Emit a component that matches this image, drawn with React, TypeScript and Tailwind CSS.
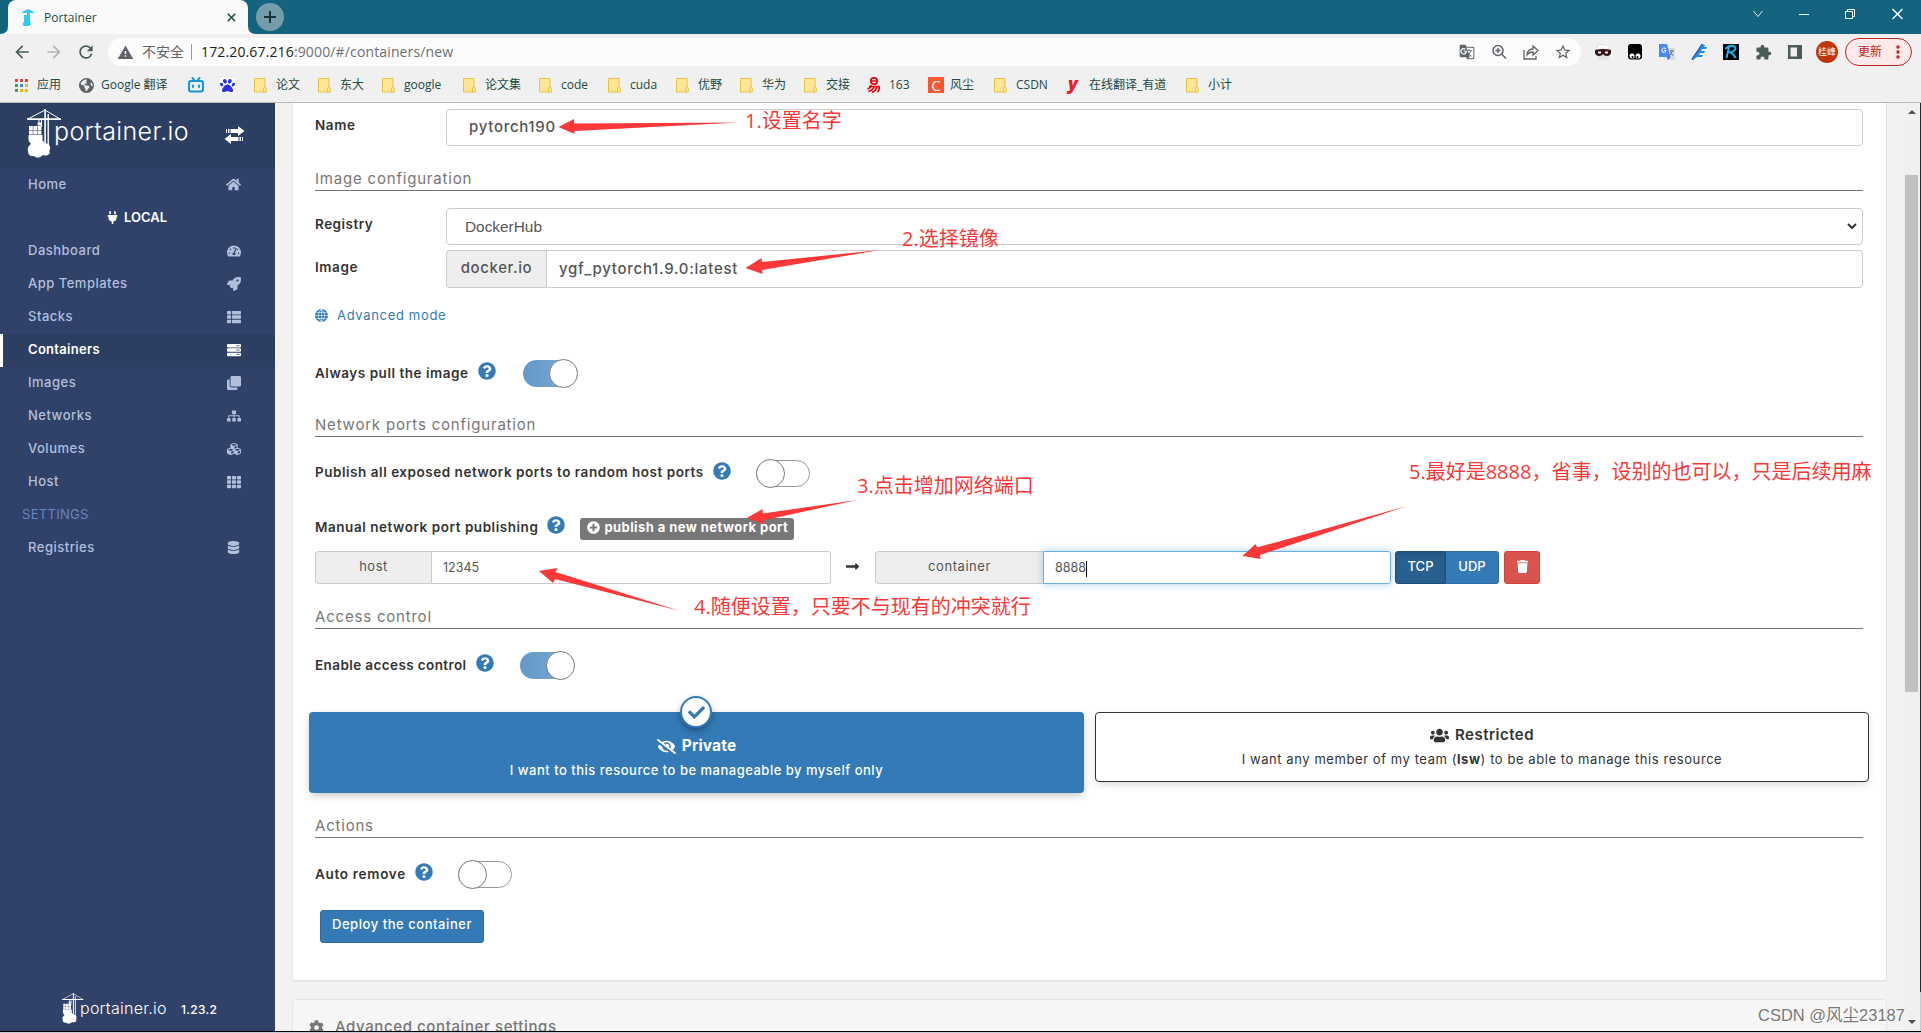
import type { ReactNode } from "react";
import {
  FaCheck, FaClone, FaCog, FaCubes, FaDatabase, FaEyeSlash, FaHome, FaLongArrowAltRight, FaPlug, FaPlusCircle,
  FaQuestionCircle, FaRocket, FaServer, FaSitemap, FaTachometerAlt, FaTh, FaThList, FaTrash, FaUsers,
} from "react-icons/fa";
import { MdArrowBack, MdArrowForward, MdExtension, MdRefresh, MdWarning, MdGTranslate, MdStarBorder } from "react-icons/md";
import { FaPaw, FaEarthAmericas } from "react-icons/fa6";

const menu = [
  { name: "Dashboard", icon: FaTachometerAlt },
  { name: "App Templates", icon: FaRocket },
  { name: "Stacks", icon: FaThList },
  { name: "Containers", icon: FaServer, active: true },
  { name: "Images", icon: FaClone },
  { name: "Networks", icon: FaSitemap },
  { name: "Volumes", icon: FaCubes },
  { name: "Host", icon: FaTh },
];

function Folder() {
  return (
    <svg width="13" height="15" viewBox="0 0 13 15">
      <path d="M.5.5h10.5v13.500H.5z" fill="#ffe694" stroke="#e8c341" />
      <path d="M9.500 14v-3.500q0-1 1-1h1q.8 0 .8 1V14z" fill="#ffe694" stroke="#e8c341" />
    </svg>
  );
}

function AppsGrid() {
  const colors = ["#ea4335", "#ea4335", "#ea4335", "#34a853", "#4285f4", "#fbbc04", "#34a853", "#fbbc04", "#fbbc04"];
  return (
    <div className="grid grid-cols-3 gap-[2px]">
      {colors.map((c, i) => (
        <span key={i} className="w-[3px] h-[3px]" style={{ backgroundColor: c }} />
      ))}
    </div>
  );
}

function Bilibili() {
  return (
    <svg width="16" height="16" viewBox="0 0 16 16" fill="none" stroke="#1296db" strokeWidth="2" strokeLinecap="round">
      <rect x="1" y="4" width="14" height="10.500" rx="2" />
      <path d="M4.500 1l1.500 2M11.500 1L10 3M5 8.500v1.500M11 8.500v1.500" />
    </svg>
  );
}

function Netease() {
  return (
    <svg width="14" height="16" viewBox="0 0 14 16" fill="none" stroke="#e60012" strokeWidth="1.700">
      <circle cx="7" cy="4" r="3.200" />
      <path d="M4 4h6M2 9.500h10q1 3-1.500 5.500M4 8q0 3-3.500 4M7 10q-1 3-5.500 4.500M10 10q-1 3.500-5 5.500" />
    </svg>
  );
}

const bookmarks: { w: string; icon: ReactNode; name?: string }[] = [
  { w: "w-16", icon: <AppsGrid />, name: "应用" },
  { w: "w-[109px]", icon: <FaEarthAmericas size={15} color="#5f6368" />, name: "Google 翻译" },
  { w: "w-8", icon: <Bilibili /> },
  { w: "w-[34px]", icon: <span className="bg-white"><FaPaw size={15} color="#2932e1" /></span> },
  { w: "w-16", icon: <Folder />, name: "论文" },
  { w: "w-16", icon: <Folder />, name: "东大" },
  { w: "w-[81px]", icon: <Folder />, name: "google" },
  { w: "w-[76px]", icon: <Folder />, name: "论文集" },
  { w: "w-[69px]", icon: <Folder />, name: "code" },
  { w: "w-[68px]", icon: <Folder />, name: "cuda" },
  { w: "w-16", icon: <Folder />, name: "优野" },
  { w: "w-16", icon: <Folder />, name: "华为" },
  { w: "w-[63px]", icon: <Folder />, name: "交接" },
  { w: "w-[61px]", icon: <Netease />, name: "163" },
  { w: "w-[66px]", icon: <span className="w-4 h-4 bg-[#fc5531] text-white text-[15px] leading-4 text-center">C</span>, name: "风尘" },
  { w: "w-[73px]", icon: <Folder />, name: "CSDN" },
  { w: "w-[119px]", icon: <span className="w-3 text-[#e8202a] text-[18px] leading-4 font-extrabold italic -mt-1 text-center">y</span>, name: "在线翻译_有道" },
  { w: "w-16", icon: <Folder />, name: "小计" },
];

function Browser() {
  return (
    <header className="h-[103px] bg-[#f0f0f0] border-b border-[#b8bab9] font-['Open_Sans','Noto_Sans_CJK_SC',sans-serif] text-[#234a43]">
      <div className="h-[34px] bg-[#14637f] flex">
        <div className="relative ml-2 w-60 h-[34px] bg-[#fafafa] rounded-t-lg flex items-center pl-[14px] pr-3">
          <svg width="12" height="17" viewBox="0 0 12 17" fill="#35c8f5">
            <path d="M0 3L6 0l6 3v1H8v9q3 3-2 4H2q-3-2 0-4V6h3V4H0z" />
          </svg>
          <span className="ml-[10px] mt-[2px] text-[12px] tracking-[0.05px]">Portainer</span>
          <svg className="ml-auto" width="9" height="9" viewBox="0 0 9 9" stroke="#234a43" strokeWidth="1.600">
            <path d="M.8.8l7.400 7.400M8.200.8L.8 8.200" />
          </svg>
          <svg className="absolute -left-2 bottom-0" width="8" height="8" fill="#fafafa"><path d="M8 0v8H0q8 0 8-8z" /></svg>
          <svg className="absolute -right-2 bottom-0" width="8" height="8" fill="#fafafa"><path d="M0 0v8h8q-8 0-8-8z" /></svg>
        </div>
        <div className="ml-2 mt-[3px] w-7 h-7 rounded-full bg-[#759caa] flex items-center justify-center">
          <svg width="12" height="12" stroke="#16323a" strokeWidth="2"><path d="M6 0v12M0 6h12" /></svg>
        </div>
        <div className="ml-auto mr-[18px] mt-2 h-3 flex gap-9 items-center">
          <svg width="10" height="12" fill="none" stroke="#dce9ee"><path d="M.5 3L5 8.500 9.500 3" /></svg>
          <svg width="10" height="12" stroke="white"><path d="M0 6.500h10" /></svg>
          <svg width="11" height="12" fill="none" stroke="white"><path d="M.5 3.500h7v7h-7zM2.500 3V1.500h7v7H8" /></svg>
          <svg width="11" height="12" stroke="white" strokeWidth="1.300"><path d="M.5 1l10 10M10.500 1l-10 10" /></svg>
        </div>
      </div>

      {/* toolbar */}
      <div className="h-9 flex items-center pl-3 text-[#4a5c58]">
        <MdArrowBack size={20} />
        <MdArrowForward size={20} className="ml-3 text-[#b4b8b7]" />
        <MdRefresh size={20} className="ml-3" />
        <div className="ml-3 w-[1473px] h-7 rounded-full bg-[#fcfcfc] flex items-center pl-[9px] text-[#5f6368]">
          <MdWarning size={17} />
          <span className="ml-2 text-[14px] leading-5">不安全</span>
          <span className="ml-[7px] w-px h-4 bg-[#9a9da0]" />
          <span className="ml-[9px] text-[14px] leading-5 tracking-[0.14px] text-[#6b6f73]">
            <span className="text-[#202124]">172.20.67.216</span>:9000/#/containers/new
          </span>
          <div className="ml-auto pr-[9px] flex items-center gap-[15px]">
            <MdGTranslate size={16} />
            <svg width="18" height="18" viewBox="0 0 18 18" fill="none" stroke="#5f6368" strokeWidth="1.500">
              <circle cx="8" cy="7.500" r="5" /><path d="M11.500 11l4.500 4.500M8 5v5M5.500 7.500h5" />
            </svg>
            <svg width="16" height="15" viewBox="0 0 16 15" fill="none" stroke="#5f6368" strokeWidth="1.300">
              <path d="M1 5v9h12v-3M4 10q0-5.500 6-6V1l5 4.500-5 4.500V7Q6 7 4 10z" />
            </svg>
            <MdStarBorder size={18} />
          </div>
        </div>
        <div className="ml-[14px] flex items-center gap-4">
          <svg width="16" height="16" viewBox="0 0 16 16">
            <path d="M2 0h9l3 3v13H2z" fill="#e3e3e3" />
            <path d="M3 1h8l2 2v4H3z" fill="white" />
            <path d="M0 6q8-2 16 0v3q-1 3-4 3-3 0-4-2-1 2-4 2-3 0-4-3z" fill="#301416" />
            <path d="M3 8.500h3M10 8.500h3" stroke="#f6dede" strokeWidth="1.800" />
          </svg>
          <svg width="16" height="16" viewBox="0 0 16 16">
            <rect x="1" width="14" height="15.500" rx="3" fill="black" />
            <circle cx="5" cy="12" r="2.500" fill="white" /><circle cx="11" cy="12" r="2.500" fill="white" />
            <circle cx="5.500" cy="13" r="1" /><circle cx="10.500" cy="13" r="1" />
          </svg>
          <svg width="16" height="16" viewBox="0 0 16 16">
            <path d="M6 4h10v12H9z" fill="#d9dbdd" />
            <path d="M0 0h8l3.500 13H0z" fill="#4a8af4" /><path d="M8 13h3.500L9 16z" fill="#3367d6" />
            <path d="M7 4.500Q4 2.500 3 5.500 2.500 9 5.500 8.500 7 8 7 6.500H5" stroke="white" fill="none" />
            <path d="M11 7h4M13 6v1q0 3-2.500 4.500M11.500 8.500l3 3.500" stroke="#6b7480" fill="none" />
          </svg>
          <svg width="16" height="16" viewBox="0 0 16 16">
            <path d="M11 0l3 1-1 2h3l-1 2h-4l-1 2h4l-1 2H9l-1 2h4l-1 2H6l-4 3H0L5 9z" fill="#2587e8" />
            <path d="M11 0L5 9l-4 6" stroke="#154a8c" fill="none" />
          </svg>
          <svg width="16" height="16" viewBox="0 0 16 16">
            <path d="M0 0h16v16H0z" />
            <path d="M3.500 14L6 3M2.500 5q3-4 8-3 4 2 0 5-3 2-5 1 4 0 7 6" stroke="#16b5f5" strokeWidth="2" fill="none" />
          </svg>
          <MdExtension size={17} className="-mr-px" />
          <svg width="16" height="16" viewBox="0 0 16 16"><path d="M1 1h14v14H1zM3.500 3.500v9H10v-9z" fill="#4a5c58" fillRule="evenodd" /></svg>
        </div>
        <span className="ml-[13px] w-[22px] h-[22px] rounded-full bg-[#bf360c] text-white text-[9px] leading-[21px] text-center">桂峰</span>
        <div className="ml-[7px] w-[67px] h-7 rounded-full border border-[#c5221f] bg-[#fbeae9] text-[#c5221f] flex items-center pl-3 text-[12px]">
          更新
          <svg className="ml-[14px]" width="4" height="14" fill="#c5221f"><circle cx="2" cy="2" r="1.700" /><circle cx="2" cy="7" r="1.700" /><circle cx="2" cy="12" r="1.700" /></svg>
        </div>
      </div>

      {/* bookmarks */}
      <div className="h-[30px] flex items-center pl-[15px] text-[12px] leading-4">
        {bookmarks.map((b, i) => (
          <div key={i} className={`${b.w} shrink-0 flex items-center whitespace-nowrap`}>
            <span className="w-[22px] flex">{b.icon}</span>
            {b.name}
          </div>
        ))}
      </div>
    </header>
  );
}

function Crane({ className }: { className: string }) {
  return (
    <svg className={className} viewBox="0 0 35 49" fill="white">
      <path d="M18 1L1 10M18 1l15 9" stroke="white" fill="none" />
      <path d="M0 9.200h34v1.800H0zM17.300 0h1.600v36h-1.600zM20.500 5h1.400v32h-1.400zM11.500 10h1v6h-1zM14 10h1v8h-1z" />
      <path d="M2 17h3.800v4H2zM6.300 17h3.800v4H6.300zM10.600 17h3.800v4h-3.800zM2 21.500h3.800v4H2zM6.300 21.500h3.800v4H6.300zM10.600 21.500h3.800v4h-3.800zM10.600 13.500h3.500v3h-3.500zM1.500 26h14v6q-3 5-9 4-5-2-5-6z" />
      <path d="M3 36q2-4 6-3 6-4 9 1 6 1 5 6-1 2 0 4-3 4-7 2-5 5-9 1-6 1-6-5-1-4 2-6z" />
    </svg>
  );
}

function Sidebar() {
  return (
    <aside className="w-[275px] shrink-0 bg-[#30426a] text-[#b2bfdc] text-[13px] font-medium tracking-[0.5px] flex flex-col">
      <div className="h-[66px] bg-[#2d3e63] flex pl-[27px]">
        <Crane className="w-[35px] h-[49px] mt-[6px]" />
        <span className="-ml-[8px] mt-3 w-[135px] text-[25px] leading-8 font-light tracking-[0.35px] text-white">portainer.io</span>
        <svg className="ml-[35px] mt-[23px] h-[18px] w-[21px]" viewBox="0 0 21 18" fill="white">
          <path d="M2 3h1v4H2zM4 3h1.500v4H4zM6.500 3H14V0l6.500 5L14 10V7H6.500zM19 11h-1v4h1zM17 11h-1.500v4H17zM14.500 11H7V8L.5 13 7 18v-3h7.500z" />
        </svg>
      </div>
      <div className="h-[33px] pb-[2px] flex items-center justify-between pl-7 pr-[34px]">Home <FaHome size={15} /></div>
      <div className="h-[33px] pb-[2px] flex items-center justify-center gap-[5px] text-white font-semibold tracking-normal"><FaPlug size={13} className="-ml-[2px]" /> LOCAL</div>
      {menu.map(({ name, icon: Icon, active }) => (
        <div
          key={name}
          className={`h-[33px] pb-[2px] flex items-center justify-between pr-[34px] ${active ? "bg-[#2d3e63] border-l-[3px] border-white pl-[25px] text-white font-semibold tracking-[0.3px]" : "pl-7"}`}
        >
          {name}
          <span className="w-[15px] flex justify-center"><Icon size={14} /></span>
        </div>
      ))}
      <div className="h-[33px] pb-[2px] flex items-center pl-[22px] text-[#6b84c2] font-normal tracking-[0.3px]">SETTINGS</div>
      <div className="h-[33px] pb-[2px] flex items-center justify-between pl-7 pr-[35px]">Registries <FaDatabase size={13} /></div>
      <div className="mt-auto h-[38px] flex pl-[62px] text-white">
        <Crane className="w-[22px] h-[31px]" />
        <span className="-ml-[4px] mt-[5px] w-[87px] text-[16px] leading-5 font-light tracking-[0.25px]">portainer.io</span>
        <span className="ml-[14px] mt-[9px] text-[12px] leading-4 tracking-[0.3px]">1.23.2</span>
      </div>
    </aside>
  );
}

function Heading({ className, children }: { className: string; children: ReactNode }) {
  return (
    <h3 className={`h-[23px] w-[1548px] border-b border-[#777] text-[15px] leading-[22px] font-normal tracking-[0.8px] text-[#777] ${className}`}>
      {children}
    </h3>
  );
}

function Toggle({ on, className }: { on?: boolean; className: string }) {
  return (
    <span className={`w-[54px] h-[27px] rounded-full relative ${on ? "bg-[linear-gradient(90deg,#6398c8,#7facd3)]" : "bg-white border border-[#999]"} ${className}`}>
      <span className={`absolute w-[29px] h-[29px] rounded-full bg-white border border-[#7a7a7a] ${on ? "-top-px -right-px" : "-top-[2px] -left-px"}`} />
    </span>
  );
}

function Help({ className }: { className: string }) {
  return <FaQuestionCircle size={18} className={`text-[#337ab7] relative -top-[2px] ${className}`} />;
}

const label = "text-[13.5px] font-semibold text-[#333] whitespace-nowrap";
const addon = "bg-[#eee] border border-[#ccc] border-r-0 rounded-l text-center text-[#555]";

function Form() {
  return (
    <section className="h-[878px] bg-white border-x border-b border-[#e5e5e5] shadow-[0_1px_1px_rgba(0,0,0,0.05)] rounded-b-sm pl-[22px] pt-[6px]">
      <div className="h-[37px] flex">
        <span className={`${label} tracking-[0.6px] w-[131px] mt-[6px] leading-5`}>Name</span>
        <div className="w-[1417px] h-[37px] border border-[#ccc] rounded pl-[22px] text-[15px] leading-[34px] font-medium tracking-[0.7px] text-[#555]">pytorch190</div>
      </div>

      <Heading className="mt-[22px]">Image configuration</Heading>
      <div className="mt-[17px] flex">
        <span className={`${label} tracking-[0.5px] w-[131px] mt-[6px] leading-5`}>Registry</span>
        <div className="w-[1417px] h-[37px] border border-[#ccc] rounded pl-[18px] pr-[5px] flex items-center justify-between font-['Liberation_Sans',sans-serif] text-[15.4px] text-[#555]">
          DockerHub
          <svg width="10" height="7" fill="none" stroke="#333" strokeWidth="2"><path d="M1 1l4 4 4-4" /></svg>
        </div>
      </div>
      <div className="mt-[5px] flex h-[38px] text-[15px] leading-[34px] font-medium">
        <span className={`${label} tracking-[0.6px] w-[131px] mt-[7px] leading-5`}>Image</span>
        <span className={`${addon} w-[100px] tracking-[0.6px]`}>docker.io</span>
        <span className="w-[1317px] border border-[#ccc] rounded-r pl-3 tracking-[0.73px] text-[#555] leading-[35px]">ygf_pytorch1.9.0:latest</span>
      </div>
      <div className="mt-[18px] mb-[-1px] h-5 flex items-center text-[13px] tracking-[0.67px] text-[#337ab7]">
        <svg width="13" height="13" viewBox="0 0 13 13" className="mr-[9px] -mt-px">
          <circle cx="6.500" cy="6.500" r="6.500" fill="#337ab7" />
          <path d="M6.500 0v13M0 6.500h13M1.500 3.500h10M1.500 9.500h10M6.500 0Q0 6.500 6.500 13M6.500 0q6.500 6.500 0 13" stroke="white" strokeWidth=".6" fill="none" />
        </svg>
        Advanced mode
      </div>
      <div className="mt-[33px] h-[30px] flex items-center">
        <span className={`${label} tracking-[0.53px] mt-px`}>Always pull the image</span><Help className="ml-[9px]" /><Toggle on className="ml-[27px]" />
      </div>

      <Heading className="mt-[26px]">Network ports configuration</Heading>
      <div className="mt-[21px] h-[30px] flex items-center">
        <span className={`${label} tracking-[0.53px] -mt-px`}>Publish all exposed network ports to random host ports</span><Help className="ml-[9px]" /><Toggle className="ml-[25px]" />
      </div>
      <div className="mt-6 h-[30px] flex items-center">
        <span className={`${label} tracking-[0.54px] mt-px`}>Manual network port publishing</span><Help className="ml-[9px]" />
        <span className="ml-[15px] mt-[3px] w-[214px] h-[22px] rounded-[3px] bg-[#777] text-white text-[13px] leading-[19px] font-bold whitespace-nowrap tracking-[0.43px] flex pl-[7px] gap-1">
          <FaPlusCircle size={13} className="mt-[3px]" /> publish a new network port
        </span>
      </div>
      <div className="mt-[9px] h-[33px] flex text-[13px] leading-[29px] text-[#555]">
        <span className={`${addon} w-[116px] tracking-[0.5px]`}>host</span>
        <span className="w-[400px] border border-[#ccc] rounded-r-[3px] pl-[11px] text-[12.5px] leading-[32px]">12345</span>
        <FaLongArrowAltRight size={15} className="ml-[14px] mt-2 mr-[15px] text-[#333]" />
        <span className={`${addon} w-[168px] tracking-[0.55px]`}>container</span>
        <span className="w-[348px] border border-[#66afe9] rounded-r-[3px] pl-[11px] text-[12.500px] leading-[32px] shadow-[0_0_8px_rgba(102,175,233,0.6)]">
          8888<span className="inline-block align-middle w-px h-4 bg-black" />
        </span>
        <span className="ml-1 w-[51px] rounded-l-[3px] bg-[#286090] border border-[#204d74] shadow-[inset_0_3px_5px_rgba(0,0,0,0.125)] text-white font-medium text-center">TCP</span>
        <span className="w-[53px] rounded-r-[3px] bg-[#337ab7] border border-l-0 border-[#2e6da4] text-white font-medium text-center">UDP</span>
        <span className="ml-[5px] w-9 rounded-[3px] bg-[#d9534f] border border-[#d43f3a] text-white flex justify-center"><FaTrash size={13} className="mt-2" /></span>
      </div>

      <Heading className="mt-[22px]">Access control</Heading>
      <div className="mt-[21px] h-[30px] flex items-center">
        <span className={`${label} tracking-[0.4px] mt-px`}>Enable access control</span><Help className="ml-[9px]" /><Toggle on className="ml-[26px]" />
      </div>
      <div className="-ml-[6px] mt-8 h-[81px] flex gap-[11px] items-start text-center text-[13px]">
        <div className="relative w-[775px] h-[81px] rounded-sm bg-[#337ab7] text-white pt-[23px] shadow-[0_3px_10px_-2px_rgba(0,0,0,0.3)]">
          <span className="absolute left-[371px] -top-4 w-8 h-8 rounded-full bg-white border-2 border-[#337ab7] text-[#337ab7] flex items-center justify-center shadow-[0_3px_8px_-2px_rgba(0,0,0,0.5)]">
            <FaCheck size={17} />
          </span>
          <p className="flex justify-center items-center gap-[6px] text-[15.5px] leading-[22px] font-bold tracking-[0.15px]"><FaEyeSlash size={19} /> Private</p>
          <p className="mt-[2px] leading-[22px] font-medium tracking-[0.5px]">I want to this resource to be manageable by myself only</p>
        </div>
        <div className="w-[774px] h-[70px] rounded-sm border border-[#333] bg-white text-[#333] pt-[11px] shadow-[0_3px_10px_-2px_rgba(0,0,0,0.2)]">
          <p className="flex justify-center items-center gap-[6px] text-[15px] leading-[22px] font-semibold tracking-[0.5px]"><FaUsers size={19} /> Restricted</p>
          <p className="mt-[2px] leading-[22px] tracking-[0.57px]">I want any member of my team (<b>lsw</b>) to be able to manage this resource</p>
        </div>
      </div>

      <Heading className="mt-[22px]">Actions</Heading>
      <div className="mt-[21px] h-[30px] flex items-center">
        <span className={`${label} tracking-[0.7px] mt-px`}>Auto remove</span><Help className="ml-[9px]" /><Toggle className="ml-[25px]" />
      </div>
      <button className="block ml-[5px] mt-[21px] w-[164px] h-[33px] pb-1 rounded-[3px] bg-[#337ab7] border border-[#2e6da4] text-white text-[13px] font-medium tracking-[0.55px]">Deploy the container</button>
    </section>
  );
}

function Annotations() {
  return (
    <div className="absolute inset-0 pointer-events-none font-['Open_Sans','Noto_Sans_CJK_SC',sans-serif] text-[20px] leading-6 text-[#fa3737] whitespace-nowrap">
      <svg className="absolute inset-0" width="1921" height="1033" fill="#fd3838">
        <path d="M558.500 127L574 119l.3 4.400L739 122.500 574.500 131v3z" />
        <path d="M745.500 268l16-10 .5 4L880 250l-118 20 .7 4z" />
        <path d="M746.700 518l16-9v4.500L857 500l-94 20.500v3.500z" />
        <path d="M539 571l18.500-3-2 4L680 611l-125-32-2 4z" />
        <path d="M1242.500 556l13-12 1.500 3.500L1407 506l-147 49 .5 4z" />
      </svg>
      <span className="absolute left-[745px] top-[109px]">1.设置名字</span>
      <span className="absolute left-[902px] top-[227px]">2.选择镜像</span>
      <span className="absolute left-[857px] top-[474px]">3.点击增加网络端口</span>
      <span className="absolute left-[694px] top-[595px]">4.随便设置，只要不与现有的冲突就行</span>
      <span className="absolute left-[1409px] top-[460px]">5.最好是8888，省事，设别的也可以，只是后续用麻</span>
      <span className="absolute left-[1758px] top-[1003px] text-[16.5px] text-[#777] font-['Liberation_Sans','Noto_Sans_CJK_SC',sans-serif] [text-shadow:1px_1px_0_white]">CSDN @风尘23187</span>
    </div>
  );
}

export default function App() {
  return (
    <div className="relative w-[1921px] h-[1033px] overflow-hidden bg-[#c7cbd6] font-['Inter',sans-serif]">
      <Browser />
      <div className="h-[928px] flex overflow-hidden">
        <Sidebar />
        <main className="flex-1 bg-[#f2f2f2] pl-[17px] pr-[16px]">
          <Form />
          <section className="mt-[18px] h-20 bg-[#f6f6f6] border border-[#e5e5e5] rounded-sm flex items-center pl-4 pb-[23px] text-[15px] font-medium tracking-[0.6px] text-[#777]">
            <FaCog size={15} className="mr-[11px]" /> Advanced container settings
          </section>
        </main>
        <div className="w-[17px] bg-[#f0f0f0] flex flex-col items-center">
          <svg className="mt-[7px]" width="8" height="4" fill="#505050"><path d="M0 4l4-4 4 4z" /></svg>
          <span className="mt-[61px] w-[13px] h-[517px] bg-[#c1c1c1]" />
          <svg className="mt-auto mb-[7px]" width="8" height="4" fill="#505050"><path d="M0 0l4 4 4-4z" /></svg>
        </div>
        <div className="w-px h-[889px] bg-[#25292b]" />
      </div>
      <div className="h-px bg-black" />
      <Annotations />
    </div>
  );
}
